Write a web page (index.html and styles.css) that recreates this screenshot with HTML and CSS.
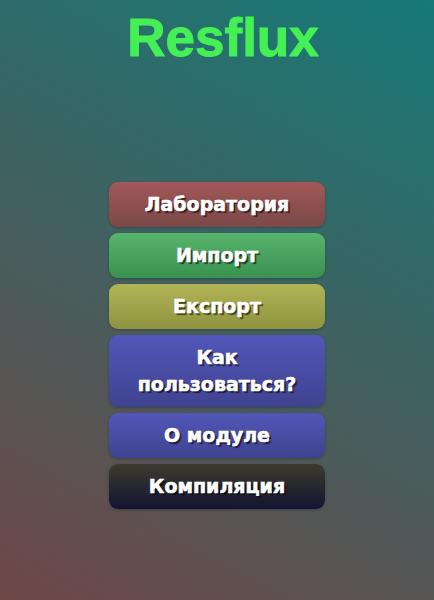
FILE: index.html
```html
<!DOCTYPE html>
<html lang="ru">
<head>
    <meta charset="UTF-8">
    <meta name="viewport" content="width=device-width, initial-scale=1.0">
    <title>Resflux</title>
    <link rel="stylesheet" href="styles.css">
</head>
<body>

    <h1 class="title">Resflux</h1>

    <div class="menu">
        <button class="menu-btn lab">Лаборатория</button>
        <button class="menu-btn import">Импорт</button>
        <button class="menu-btn export">Експорт</button>
        <button class="menu-btn help">Как<br>пользоваться?</button>
        <button class="menu-btn about">О модуле</button>
        <button class="menu-btn compile">Компиляция</button>
    </div>

</body>
</html>
```

FILE: styles.css
```css
html, body { height: 100%; }
body {
    margin: 0;
    font-family: "Liberation Sans", Arial, sans-serif;
    background: linear-gradient(28deg, #6f4747 0%, #157a78 100%);
    display: flex;
    flex-direction: column;
    align-items: center;
}

.title {
    margin: 11px 0 0;
    padding-left: 12px;
    font-size: 53px;
    line-height: 53px;
    font-weight: bold;
    color: #45f055;
    -webkit-text-stroke: 1px #45f055;
}

.menu {
    margin-top: 118px;
    width: 216px;
    display: flex;
    flex-direction: column;
    gap: 6px;
}

.menu-btn {
    border: none;
    border-radius: 9px;
    padding: 9px 4px;
    font-family: "DejaVu Sans", sans-serif;
    font-size: 19px;
    font-weight: bold;
    line-height: 27px;
    color: #fff;
    -webkit-text-stroke: 0.6px #fff;
    text-shadow: 2px 2px 1px rgba(0, 0, 0, 0.6);
    box-shadow: 0 1px 3px rgba(0, 0, 0, 0.25);
    cursor: pointer;
}

.menu-btn.lab { background: linear-gradient(#a35757, #7b4848); }
.menu-btn.import { background: linear-gradient(#57b46c, #3a9150); }
.menu-btn.export { background: linear-gradient(#b1b456, #8f933f); }
.menu-btn.help { background: linear-gradient(#5256b8, #3f438f); }
.menu-btn.about { background: linear-gradient(#5256b8, #3f438f); }
.menu-btn.compile { background: linear-gradient(#3c3b2e, #131432); }
```
